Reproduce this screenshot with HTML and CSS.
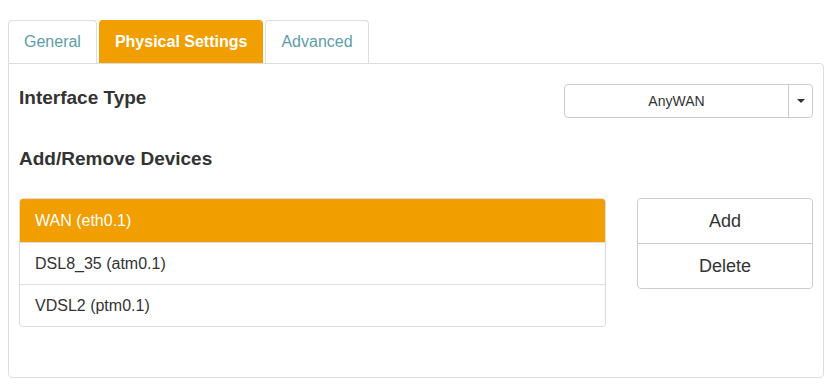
FILE: index.html
```html
<!DOCTYPE html>
<html>
<head>
<meta charset="utf-8">
<link rel="stylesheet" href="styles.css">
</head>
<body>
<div class="wrap">
  <ul class="tabs">
    <li class="tab">General</li>
    <li class="tab active">Physical Settings</li>
    <li class="tab">Advanced</li>
  </ul>
  <div class="panel">
    <div class="row-type">
      <h4 class="label">Interface Type</h4>
      <div class="select">
        <span class="select-value">AnyWAN</span>
        <span class="select-caret"><span class="caret"></span></span>
      </div>
    </div>
    <h4 class="label section">Add/Remove Devices</h4>
    <div class="devices">
      <ul class="list">
        <li class="item selected">WAN (eth0.1)</li>
        <li class="item">DSL8_35 (atm0.1)</li>
        <li class="item">VDSL2 (ptm0.1)</li>
      </ul>
      <div class="btns">
        <button class="btn">Add</button>
        <button class="btn">Delete</button>
      </div>
    </div>
  </div>
</div>
</body>
</html>
```

FILE: styles.css
```css
* { box-sizing: border-box; }
body {
  margin: 0;
  font-family: "Liberation Sans", Arial, sans-serif;
  color: #333;
  background: #fff;
}
.wrap {
  padding: 20px 10px 0 8px;
  width: 834px;
}
.tabs {
  list-style: none;
  margin: 0;
  padding: 0;
  display: flex;
  gap: 2px;
  position: relative;
  z-index: 1;
}
.tab {
  font-size: 16px;
  line-height: 21px;
  padding: 10px 15px 11px;
  border: 1px solid #ddd;
  border-bottom: none;
  border-radius: 4px 4px 0 0;
  color: #5c9ea8;
  background: #fff;
}
.tab.active {
  background: #f09e00;
  border-color: #f09e00;
  color: #fff;
  font-weight: bold;
}
.panel {
  border: 1px solid #ddd;
  border-radius: 0 4px 4px 4px;
  height: 315px;
  padding: 20px 10px 0 10px;
  width: 816px;
}
.row-type {
  display: flex;
  justify-content: space-between;
  align-items: center;
  height: 34px;
}
.label {
  margin: 0;
  font-size: 19px;
  font-weight: bold;
  line-height: 22px;
  color: #333;
}
.row-type .label { margin-top: -6px; }
.section { margin-top: 30px; }
.select {
  width: 249px;
  height: 34px;
  border: 1px solid #ccc;
  border-radius: 4px;
  display: flex;
  font-size: 14px;
}
.select-value {
  flex: 1;
  display: flex;
  align-items: center;
  justify-content: center;
  border-right: 1px solid #ccc;
}
.select-caret {
  width: 23px;
  display: flex;
  align-items: center;
  justify-content: center;
}
.caret {
  width: 0; height: 0;
  border-left: 4px solid transparent;
  border-right: 4px solid transparent;
  border-top: 4px solid #333;
}
.devices {
  display: flex;
  justify-content: space-between;
  margin-top: 28px;
}
.list {
  list-style: none;
  margin: 0;
  padding: 0;
  width: 587px;
  border: 1px solid #ddd;
  border-radius: 4px;
  overflow: hidden;
}
.item {
  font-size: 16px;
  line-height: 22px;
  padding: 10px 15px 9px;
  border-top: 1px solid #ddd;
  color: #333;
}
.item:first-child { border-top: none; padding-top: 11px; padding-bottom: 10px; }
.item.selected {
  background: #f09e00;
  color: #fff;
}
.btns {
  width: 176px;
  display: flex;
  flex-direction: column;
  border: 1px solid #ccc;
  border-radius: 4px;
  height: 91px;
  align-self: flex-start;
}
.btn {
  flex: 1;
  background: #fff;
  border: none;
  font-family: "Liberation Sans", Arial, sans-serif;
  font-size: 18px;
  color: #333;
  padding: 0;
  border-radius: 4px;
}
.btn + .btn { border-top: 1px solid #ccc; border-radius: 0 0 4px 4px; }
```
